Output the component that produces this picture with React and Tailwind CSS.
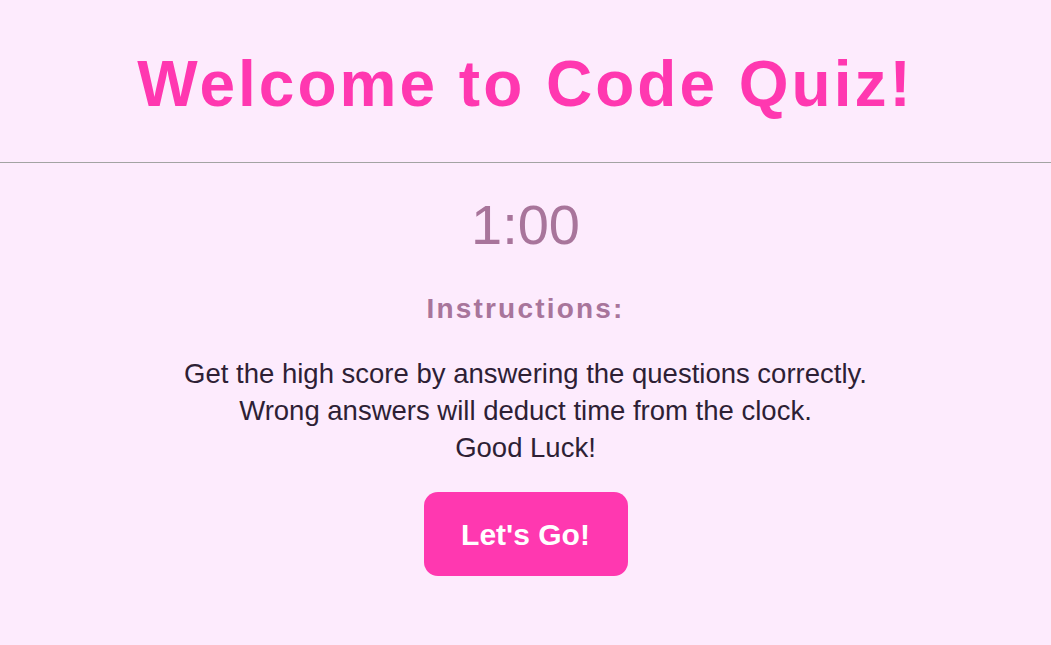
export default function App() {
    return (
        <div className="min-h-[645px] bg-[#fdebfd] font-['Liberation_Sans',Arial,sans-serif] text-center">
            <header className="pt-[44px] pb-[38px] border-b border-[#a3a3a3]">
                <h1 className="text-[64px] leading-[80px] font-bold tracking-[3px] text-[#ff38b0]">Welcome to Code Quiz!</h1>
            </header>

            <main className="flex flex-col items-center">
                <p className="mt-[30px] text-[56px] leading-[64px] text-[#a8759b]">1:00</p>

                <h2 className="mt-[35px] text-[28px] leading-[34px] font-bold tracking-[2.2px] text-[#a8759b]">Instructions:</h2>

                <p className="mt-[29px] text-[27.5px] leading-[37px] text-[#2e1f35]">
                    Get the high score by answering the questions correctly.
                    <br />
                    Wrong answers will deduct time from the clock.
                    <br />
                    Good Luck!
                </p>

                <button className="mt-[26px] w-[204px] h-[84px] bg-[#ff38b0] rounded-[14px] text-white text-[30px] font-bold">
                    Let's Go!
                </button>
            </main>
        </div>
    )
}
